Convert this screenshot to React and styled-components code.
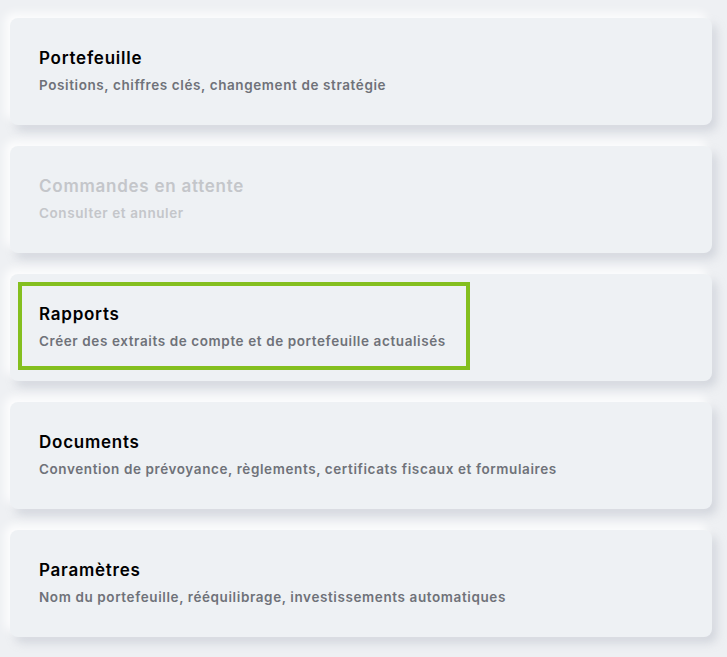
import React from "react";
import styled, { createGlobalStyle } from "styled-components";

const GlobalStyle = createGlobalStyle`
  html, body {
    margin: 0;
    padding: 0;
    background: #eef0f3;
  }
  body {
    font-family: Inter, "Noto Sans", "Liberation Sans", sans-serif;
  }
`;

const items = [
  {
    title: "Portefeuille",
    text: "Positions, chiffres clés, changement de stratégie",
  },
  {
    title: "Commandes en attente",
    text: "Consulter et annuler",
    disabled: true,
  },
  {
    title: "Rapports",
    text: "Créer des extraits de compte et de portefeuille actualisés",
    focused: true,
  },
  {
    title: "Documents",
    text: "Convention de prévoyance, règlements, certificats fiscaux et formulaires",
  },
  {
    title: "Paramètres",
    text: "Nom du portefeuille, rééquilibrage, investissements automatiques",
  },
];

const App = () => {
  return (
    <>
      <GlobalStyle />
      <MenuList>
        {items.map((item) => (
          <MenuCard key={item.title}>
            <MenuLink $focused={item.focused} $disabled={item.disabled}>
              <MenuTitle>{item.title}</MenuTitle>
              <MenuText>{item.text}</MenuText>
            </MenuLink>
          </MenuCard>
        ))}
      </MenuList>
    </>
  );
};

const MenuList = styled.div`
  display: flex;
  flex-direction: column;
  gap: 21px;
  padding: 18px 15px 20px 10px;
`;

const MenuCard = styled.div`
  height: 107px;
  box-sizing: border-box;
  padding: 8px 8px 11px;
  background: #eef1f4;
  border-radius: 8px;
  box-shadow: -5px -5px 10px rgba(255, 255, 255, 0.9),
    5px 6px 10px rgba(160, 165, 180, 0.35);
`;

const MenuLink = styled.div`
  display: inline-flex;
  flex-direction: column;
  box-sizing: border-box;
  height: 88px;
  padding: 16px 20px 0 17px;
  border: 4px solid ${(p) => (p.$focused ? "#84bf1f" : "transparent")};
  color: ${(p) => (p.$disabled ? "#c4c6ca" : "#000")};

  & > p {
    color: ${(p) => (p.$disabled ? "#c4c6ca" : "#6f7279")};
  }
`;

const MenuTitle = styled.div`
  font-size: 17px;
  font-weight: 600;
  line-height: 24px;
  letter-spacing: 0.75px;
`;

const MenuText = styled.p`
  margin: 6px 0 0;
  font-size: 13.5px;
  font-weight: 600;
  line-height: 18px;
  letter-spacing: 0.6px;
`;

export default App;
